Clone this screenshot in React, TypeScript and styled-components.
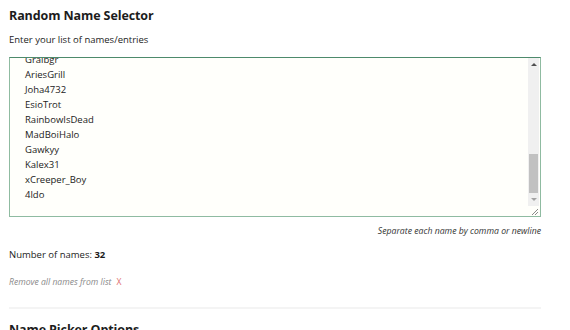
import React from 'react';
import styled, { createGlobalStyle } from 'styled-components';

const names = [
  'Mikey_T', 'Snowball99', 'LunaMoth', 'Breadwinner', 'Captain_K', 'Zorbo',
  'PixelPanda', 'Tomtom88', 'Rhyno', 'SillyGoose', 'Jetstream', 'Fizzle',
  'NightOwl_7', 'Ketchup', 'Bramble', 'Quasar', 'Dinky', 'Hexa', 'Oaklee',
  'Vortex12', 'Muffin', 'Sprocket', 'Graibgr', 'AriesGrill', 'Joha4732',
  'EsioTrot', 'RainbowIsDead', 'MadBoiHalo', 'Gawkyy', 'Kalex31',
  'xCreeper_Boy', '4ldo',
];

const GlobalStyle = createGlobalStyle`
  body {
    margin: 0;
    background: #ffffff;
    font-family: "Open Sans", "Noto Sans", sans-serif;
    color: #1c1c1c;
  }
`;

const Page = styled.div`
  width: 532px;
  padding: 6px 9px 0;
  display: flex;
  flex-direction: column;
`;

const Title = styled.h2`
  margin: 0;
  font-size: 12.5px;
  font-weight: 700;
  line-height: 20px;
  letter-spacing: -0.1px;
`;

const Label = styled.label`
  margin-top: 7px;
  font-size: 9.5px;
  line-height: 14px;
`;

const Box = styled.div`
  margin-top: 10px;
  height: 158px;
  display: flex;
  border: 1px solid #8fbba1;
  border-top-color: #4d8a6c;
  background: #fffffb;
`;

const NameBox = styled.textarea`
  flex: 1;
  box-sizing: border-box;
  height: 100%;
  padding: 4px 15px 14px;
  border: none;
  background: transparent;
  font-family: inherit;
  font-size: 9.5px;
  line-height: 15px;
  color: #222;
  resize: none;
  outline: none;
  overflow: hidden;
`;

const ScrollTrack = styled.div`
  width: 11px;
  margin-right: 1px;
  display: flex;
  flex-direction: column;
  background: #f0f0f0;
`;

const Arrow = styled.div<{ $down?: boolean }>`
  height: 13px;
  display: flex;
  align-items: center;
  justify-content: center;

  &::before {
    content: '';
    border-left: 3px solid transparent;
    border-right: 3px solid transparent;
    ${(p) => (p.$down ? 'border-top: 3px solid #a3a3a3;' : 'border-bottom: 3px solid #505050;')}
  }
`;

const Rail = styled.div`
  flex: 1;
  display: flex;
  flex-direction: column;
  padding: 0 1px;
`;

const Thumb = styled.div`
  background: #c1c1c1;
`;

const Grip = styled.div`
  height: 10px;
  background: #fffffb;
  display: flex;
  align-items: flex-end;
  justify-content: flex-end;
`;

const Hint = styled.div`
  margin-top: 8px;
  align-self: flex-end;
  font-size: 8.7px;
  font-style: italic;
  line-height: 12px;
  color: #333;
`;

const Count = styled.div`
  margin-top: 11px;
  font-size: 9.5px;
  line-height: 14px;

  b {
    font-weight: 700;
  }
`;

const Clear = styled.div`
  margin-top: 14px;
  font-size: 8.6px;
  font-style: italic;
  line-height: 12px;
  color: #8a8a8a;
  display: flex;
  gap: 5px;
`;

const ClearX = styled.span`
  font-style: normal;
  color: #e07070;
`;

const Divider = styled.hr`
  margin: 19px 0 0;
  border: none;
  height: 2px;
  background: #f4f4f4;
`;

const Section = styled(Title)`
  margin-top: 11px;
`;

export default function App() {
  const ref = React.useRef<HTMLTextAreaElement>(null);
  const [pos, setPos] = React.useState({ top: 0.67, size: 0.3 });

  React.useEffect(() => {
    const el = ref.current;
    if (!el) return;
    el.scrollTop = el.scrollHeight;
    const size = el.clientHeight / el.scrollHeight;
    setPos({ top: el.scrollTop / el.scrollHeight, size });
  }, []);

  return (
    <>
      <GlobalStyle />
      <Page>
        <Title>Random Name Selector</Title>
        <Label>Enter your list of names/entries</Label>
        <Box>
          <NameBox ref={ref} defaultValue={names.join('\n')} spellCheck />
          <ScrollTrack>
            <Arrow />
            <Rail>
              <div style={{ flex: pos.top }} />
              <Thumb style={{ flex: pos.size }} />
            </Rail>
            <Arrow $down />
            <Grip>
              <svg width="8" height="8" viewBox="0 0 8 8">
                <path d="M7 1 L1 7 M7 4 L4 7" stroke="#8a8a8a" strokeWidth="1" />
              </svg>
            </Grip>
          </ScrollTrack>
        </Box>
        <Hint>Separate each name by comma or newline</Hint>
        <Count>
          Number of names: <b>32</b>
        </Count>
        <Clear>
          Remove all names from list <ClearX>X</ClearX>
        </Clear>
        <Divider />
        <Section>Name Picker Options</Section>
      </Page>
    </>
  );
}
